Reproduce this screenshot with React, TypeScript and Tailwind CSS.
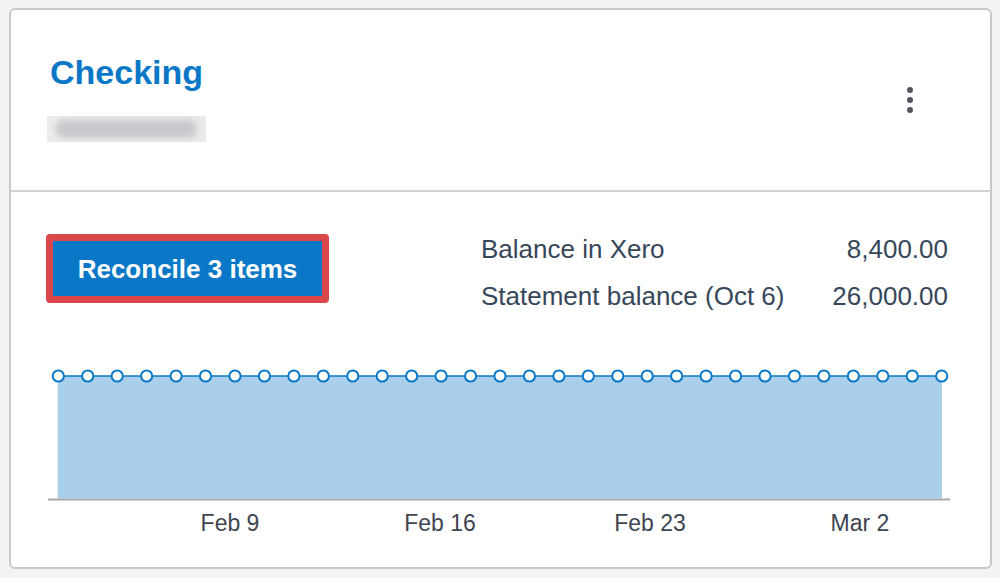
import React from "react";

const FONT = { fontFamily: '"Liberation Sans", Arial, Helvetica, sans-serif' };

function Chart() {
  const n = 31;
  const x0 = 10.3;
  const x1 = 893.7;
  const step = (x1 - x0) / (n - 1);
  const dots = Array.from({ length: n }, (_, i) => x0 + i * step);
  const labels = [
    { x: 182, t: "Feb 9" },
    { x: 392, t: "Feb 16" },
    { x: 602, t: "Feb 23" },
    { x: 812, t: "Mar 2" },
  ];
  return (
    <svg width="902" height="185" viewBox="0 0 902 185" className="block">
      <rect x="9.7" y="16" width={894 - 9.7} height={138.4 - 16} fill="#a9cfeb" />
      <line x1="0" y1="139.4" x2="902" y2="139.4" stroke="#a6a8ab" strokeWidth="2" />
      <line x1={x0} y1="16" x2={x1} y2="16" stroke="#0a78c6" strokeWidth="1.5" />
      {dots.map((x, i) => (
        <circle key={i} cx={x} cy="16" r="5.6" fill="#ffffff" stroke="#0a78c6" strokeWidth="2" />
      ))}
      {labels.map((l) => (
        <text
          key={l.t}
          x={l.x}
          y="170.7"
          textAnchor="middle"
          fontSize="23"
          fill="#3e4551"
          style={FONT}
        >
          {l.t}
        </text>
      ))}
    </svg>
  );
}

export default function App() {
  return (
    <div className="w-[1000px] h-[578px] bg-[#f2f3f5] overflow-hidden pt-[8px] pl-[9px]" style={FONT}>
      <div className="w-[983px] h-[561px] bg-white border-2 border-[#c8c9cd] rounded-[6px] overflow-hidden">
        {/* Header */}
        <div className="h-[182px] border-b-2 border-[#d2d3d6] flex justify-between pt-[42px] pl-[36px] pr-[77px]">
          <div className="flex flex-col">
            <div className="ml-[3px] text-[34px] leading-[40px] font-bold text-[#0a78c7]">Checking</div>
            <div className="mt-[24px] w-[159px] h-[26px] bg-[#ebebec] overflow-hidden flex px-[9px] py-[4px]">
              <div className="flex-1 bg-[#c8c9cc] rounded-[8px] blur-[3px]" />
            </div>
          </div>
          <div className="mt-[35px] flex flex-col gap-[4px]">
            <div className="w-[6px] h-[6px] rounded-full bg-[#51565f]" />
            <div className="w-[6px] h-[6px] rounded-full bg-[#51565f]" />
            <div className="w-[6px] h-[6px] rounded-full bg-[#51565f]" />
          </div>
        </div>
        {/* Body */}
        <div className="pt-[34px] pl-[35px] pr-[42px]">
          <div className="flex items-start justify-between">
            <div className="mt-[8px] border-[7px] border-[#d9474a] rounded-[4px]">
              <div className="w-[269px] h-[55px] bg-[#0a78c6] flex items-center justify-center text-white font-bold text-[26px] leading-none">
                Reconcile 3 items
              </div>
            </div>
            <div className="w-[467px] grid grid-cols-[1fr_auto] text-[26px] leading-[47px] text-[#36475a]">
              <div>Balance in Xero</div>
              <div className="text-right">8,400.00</div>
              <div>Statement balance (Oct 6)</div>
              <div className="text-right">26,000.00</div>
            </div>
          </div>
          <div className="mt-[40px] ml-[2px]">
            <Chart />
          </div>
        </div>
      </div>
    </div>
  );
}
